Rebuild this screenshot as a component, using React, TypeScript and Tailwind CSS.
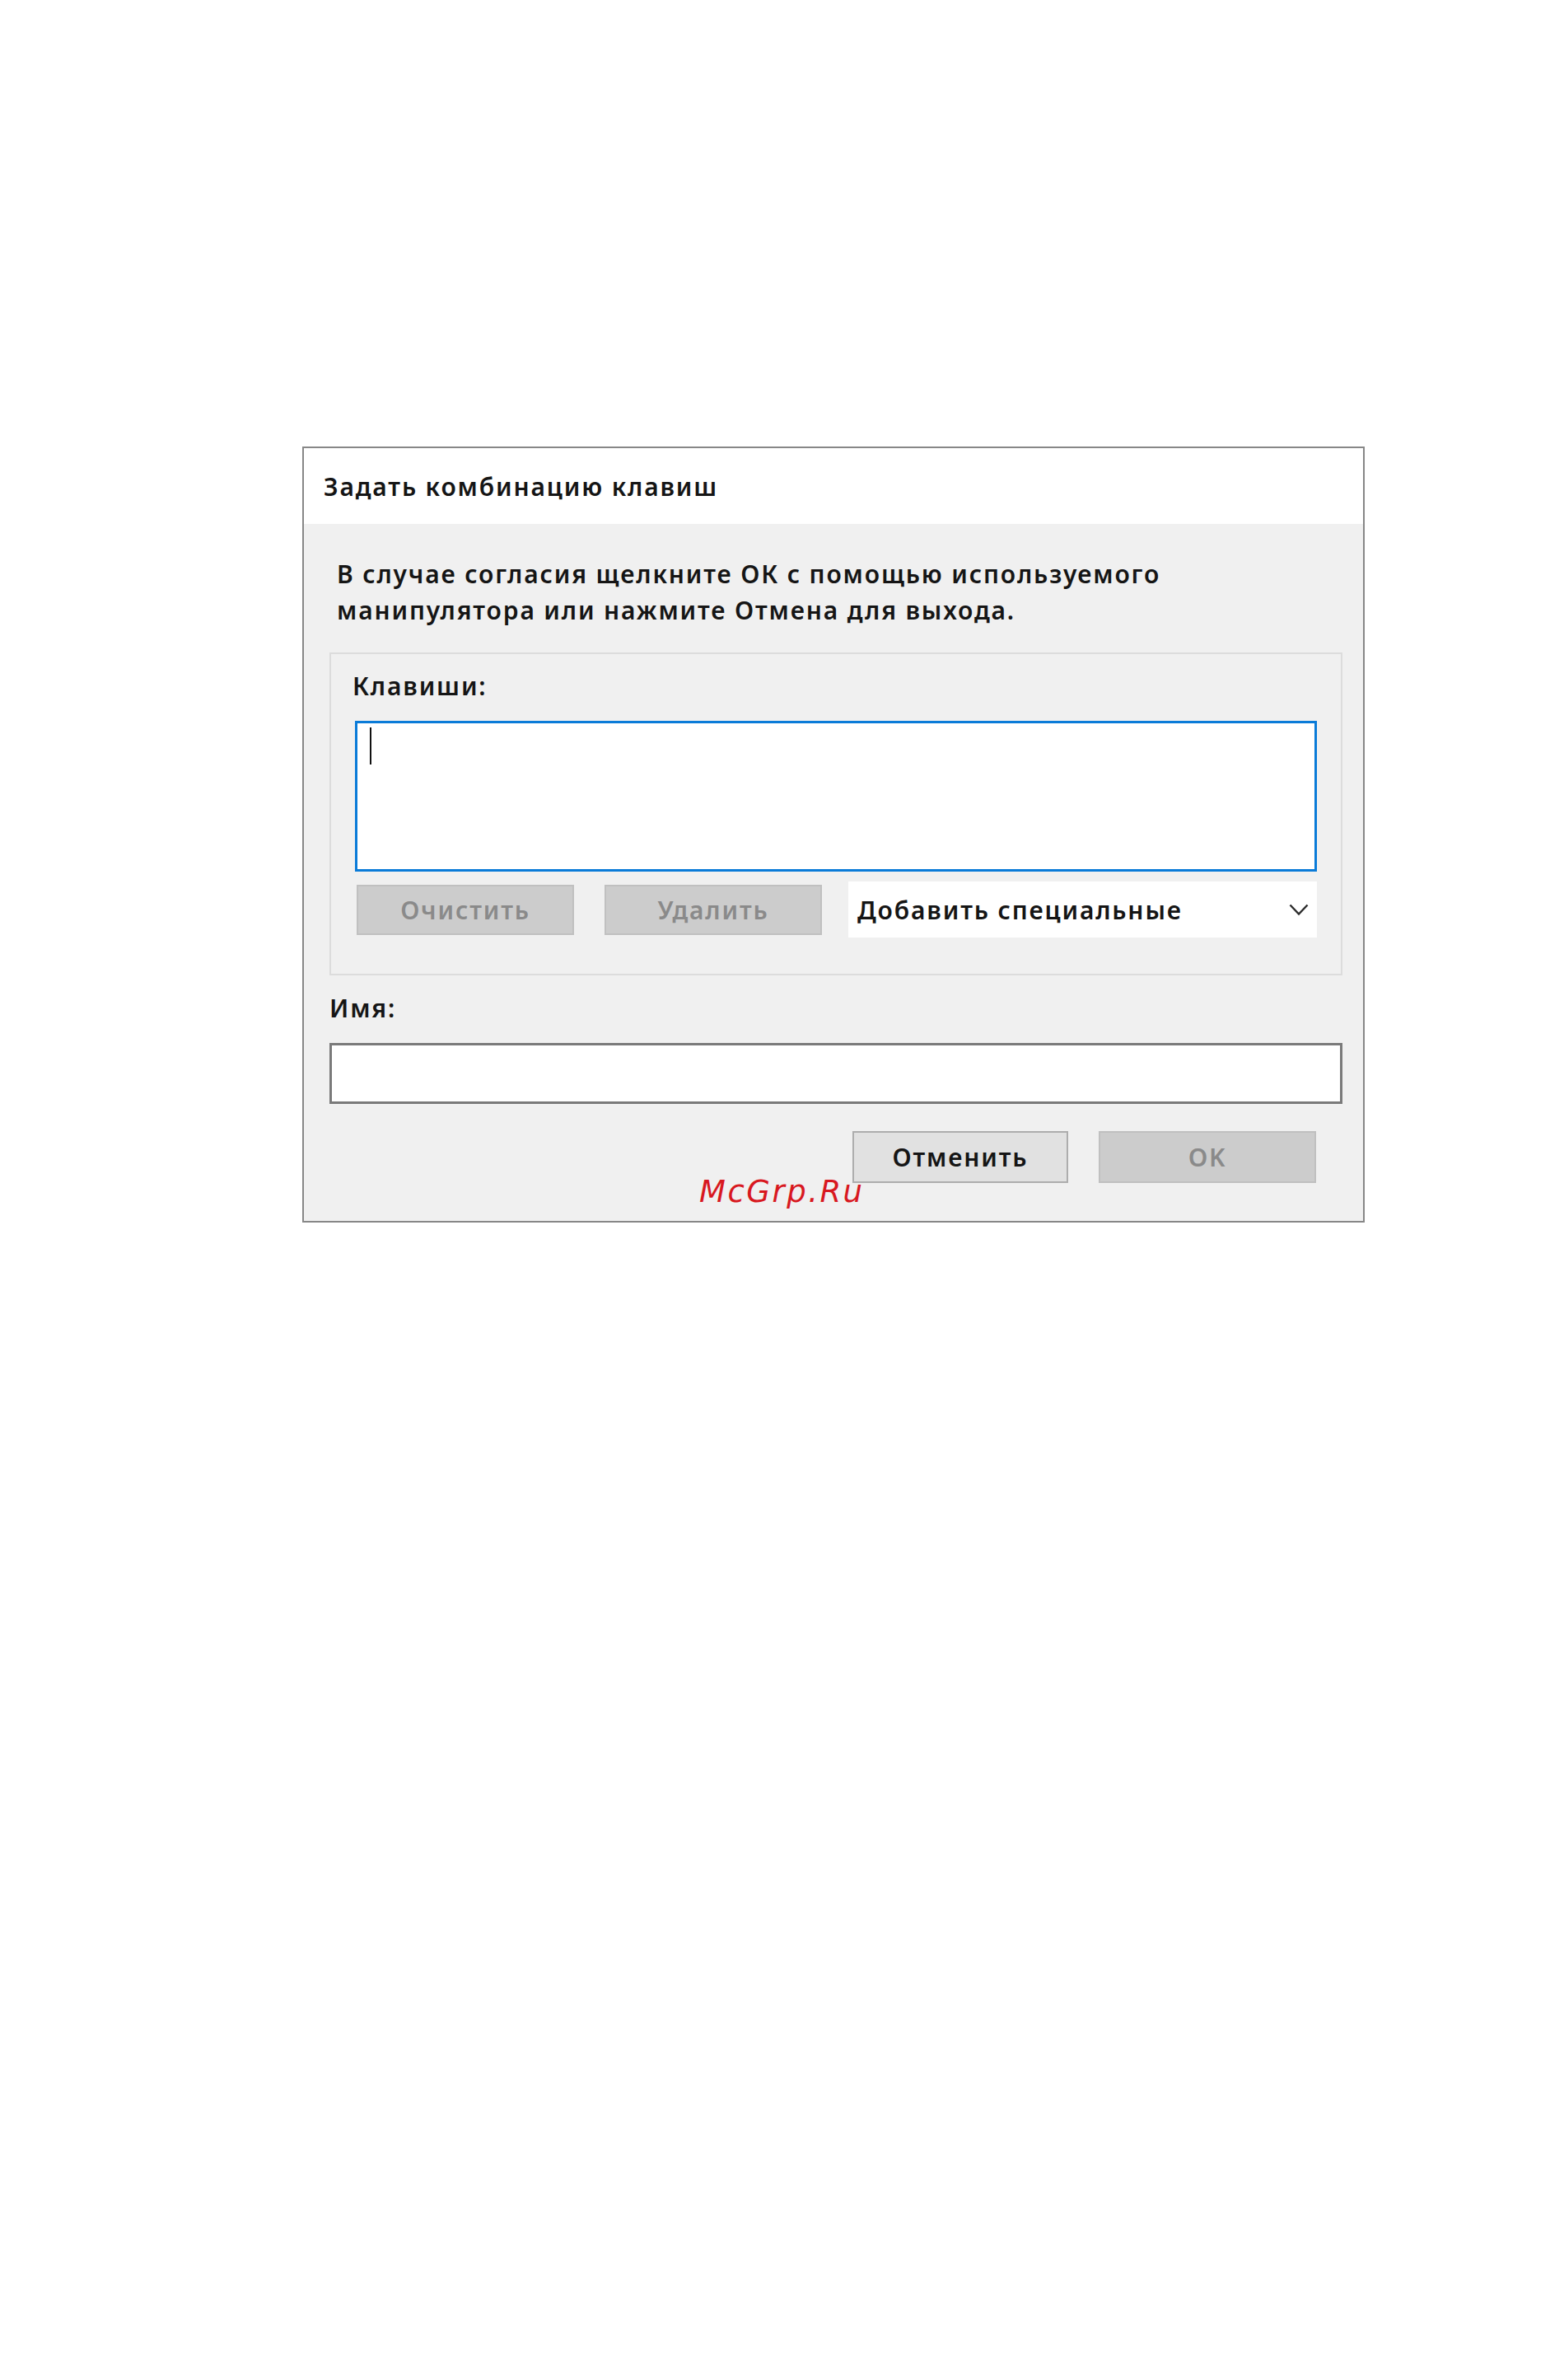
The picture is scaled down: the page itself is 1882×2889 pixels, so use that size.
const font = { fontFamily: '"Noto Sans", "Open Sans", sans-serif' };

export default function App() {
  return (
    <div className="min-h-[2889px] w-full bg-white pl-[367px] pt-[542px]" style={font}>
      <div className="relative flex h-[942px] w-[1290px] flex-col border-2 border-[#878787] bg-[#f0f0f0] text-[30px] font-semibold tracking-[1.85px] text-[#151515]">
        {/* title */}
        <div className="flex h-[92px] items-center bg-white pl-[24px]">Задать комбинацию клавиш</div>

        <div className="flex flex-col pl-[31px] pr-[25px]">
          <p className="pl-[9px] pt-[39px] leading-[44px]">
            В случае согласия щелкните ОК с помощью используемого
            <br />
            манипулятора или нажмите Отмена для выхода.
          </p>

          {/* keys group */}
          <div className="mt-[29px] flex flex-col border-2 border-[#dcdcdc] px-[29px] pb-[44px] pt-[17px]">
            <div className="-ml-[3px] leading-[44px]">Клавиши:</div>
            <div className="mt-[20px] h-[183px] border-[3px] border-[#0a7bd8] bg-white pl-[15px] pt-[5px]">
              <div className="h-[45px] w-[2px] bg-[#111]" />
            </div>
            <div className="mt-[12px] flex h-[68px] items-center">
              <button className="ml-[2px] h-[61px] w-[264px] border-2 border-[#c0c0c0] bg-[#cccccc] text-[#8a8a8a]">
                Очистить
              </button>
              <button className="ml-[37px] h-[61px] w-[264px] border-2 border-[#c0c0c0] bg-[#cccccc] text-[#8a8a8a]">
                Удалить
              </button>
              <div className="ml-[32px] flex h-[68px] flex-1 items-center justify-between bg-white pl-[11px] pr-[10px]">
                <span>Добавить специальные</span>
                <svg width="24" height="15" viewBox="0 0 24 15" fill="none">
                  <polyline points="1.5,1.5 12,12.5 22.5,1.5" stroke="#2b2b2b" strokeWidth="2.4" />
                </svg>
              </div>
            </div>
          </div>

          <div className="mt-[18px] leading-[44px]">Имя:</div>
          <div className="mt-[20px] h-[74px] border-[3px] border-[#7a7a7a] bg-white" />

          <div className="mt-[33px] flex justify-end gap-[37px] pr-[32px]">
            <button className="h-[63px] w-[262px] border-2 border-[#adadad] bg-[#e1e1e1] text-[#151515]">
              Отменить
            </button>
            <button className="h-[63px] w-[264px] border-2 border-[#c0c0c0] bg-[#cccccc] text-[#8a8a8a]">
              OK
            </button>
          </div>
        </div>

        {/* watermark */}
        <div
          className="absolute left-[480px] top-[881px] text-[37px] font-normal italic leading-[44px] tracking-[2.5px] text-[#d8181f]"
          style={{ fontFamily: '"DejaVu Sans", sans-serif' }}
        >
          McGrp.Ru
        </div>
      </div>
    </div>
  );
}
